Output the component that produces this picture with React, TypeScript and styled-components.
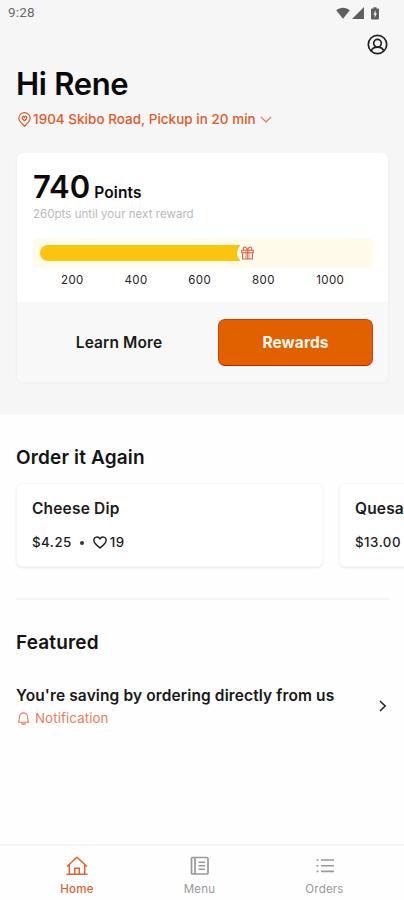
import React from "react";
import styled, { createGlobalStyle } from "styled-components";

const GlobalStyle = createGlobalStyle`
  * { box-sizing: border-box; }
  html, body { margin: 0; padding: 0; background: #fff; }
  body { font-family: Inter, "Liberation Sans", sans-serif; color: #111; }
  h1, h2, h3, p { margin: 0; }
  svg { display: block; flex: none; }
  button { font-family: inherit; cursor: pointer; }
`;

const ORANGE = "#e0592a";

const Screen = styled.div`
  width: 404px;
  height: 900px;
  display: flex;
  flex-direction: column;
  overflow: hidden;
  background: #fefefe;
`;

const Hero = styled.header`
  height: 415px;
  flex: none;
  background: #f6f6f6;
  border-bottom: 1px solid #f8f8f8;
`;

const StatusBar = styled.div`
  height: 26px;
  padding: 0 25px 0 8px;
  display: flex;
  align-items: center;
  justify-content: space-between;
  font: 400 13.5px/26px Roboto, sans-serif;
  color: #6a6a6a;
`;

const Clock = styled.span`
  height: 26px;
  line-height: 25px;
  letter-spacing: 0.2px;
`;

const StatusIcons = styled.div`
  height: 24px;
  display: flex;
  align-items: center;
`;

const Spacer = styled.span<{ $w: number }>`
  width: ${(p) => p.$w}px;
`;

const AccountRow = styled.div`
  height: 37px;
  padding: 8px 16px 0 0;
  display: flex;
  justify-content: flex-end;
`;

const Greeting = styled.h1`
  height: 41px;
  padding-left: 16px;
  font-size: 31px;
  line-height: 42px;
  font-weight: 600;
  letter-spacing: -0.3px;
  color: #080808;
`;

const LocationRow = styled.div`
  height: 30px;
  padding-left: 18px;
  display: flex;
  align-items: center;
  color: ${ORANGE};
`;

const LocationText = styled.span`
  margin: 0 4px 0 2px;
  font-size: 13.4px;
  line-height: 20px;
  font-weight: 500;
  letter-spacing: 0.07px;
  white-space: nowrap;
`;

const RewardsCard = styled.section`
  width: 373px;
  height: 231px;
  margin: 18px 0 0 16px;
  border: 1px solid #f1f1f1;
  border-top-color: #f6f6f6;
  border-radius: 7px;
  background: #fff;
  box-shadow: 0 1px 2px rgba(0, 0, 0, 0.03);
  overflow: hidden;
`;

const PointsPanel = styled.div`
  height: 149px;
  padding: 15px 15px 0 16px;
`;

const PointsLine = styled.div`
  height: 38px;
  display: flex;
  align-items: baseline;
  gap: 4px;
  color: #0a0a0a;
`;

const PointsValue = styled.span`
  font-size: 31px;
  line-height: 38px;
  font-weight: 600;
`;

const PointsUnit = styled.span`
  font-size: 15.5px;
  font-weight: 600;
  letter-spacing: 0.15px;
`;

const PointsHint = styled.p`
  height: 16px;
  font-size: 11.5px;
  line-height: 16px;
  letter-spacing: 0.04px;
  color: #b9b9b9;
  white-space: nowrap;
`;

const Track = styled.div`
  height: 30px;
  margin-top: 16px;
  padding: 0 8px 0 7px;
  display: flex;
  align-items: center;
  border-radius: 5px;
  background: #fffae9;
`;

const Fill = styled.div`
  width: 200px;
  height: 16px;
  border-radius: 8px 0 0 8px;
  background: #f9c510;
`;

const GiftMarker = styled.div`
  width: 20px;
  height: 20px;
  margin-left: -3px;
  display: grid;
  place-items: center;
  border-radius: 50%;
  background: #fffdf6;
  color: #df5b35;
`;

const Scale = styled.div`
  height: 16px;
  margin-top: 4px;
  padding-left: 7.5px;
  display: grid;
  grid-template-columns: repeat(4, 63.7px) 70px;
  text-align: center;
  font-size: 11.5px;
  line-height: 16px;
  letter-spacing: 0.4px;
  color: #222;
`;

const CardActions = styled.div`
  height: 81px;
  padding: 17px 15px 0 16px;
  display: grid;
  grid-template-columns: 172px 155px;
  column-gap: 13px;
  background: #f8f8f8;
`;

const ActionButton = styled.button<{ $primary?: boolean }>`
  height: 47px;
  padding: 0;
  border: 1px solid ${(p) => (p.$primary ? "#d43d0c" : "transparent")};
  border-bottom-color: ${(p) => (p.$primary ? "#cf1c06" : "transparent")};
  border-radius: 7px;
  background: ${(p) => (p.$primary ? "#e16100" : "transparent")};
  color: ${(p) => (p.$primary ? "#fff6ee" : "#1a1a1a")};
  font-size: 15.5px;
  font-weight: ${(p) => (p.$primary ? 700 : 600)};
  letter-spacing: 0.1px;
`;

const Content = styled.main`
  flex: 1;
  overflow: hidden;
`;

const SectionTitle = styled.h2`
  height: 25px;
  margin: 30px 0 0 16px;
  font-size: 19px;
  line-height: 26px;
  font-weight: 600;
  letter-spacing: 0.16px;
  color: #141414;
`;

const OrderList = styled.div`
  height: 114px;
  padding: 13px 0 0 16px;
  display: flex;
  gap: 16px;
  overflow: hidden;
`;

const OrderCard = styled.article`
  width: 307px;
  height: 84px;
  flex: none;
  padding: 14px 15px 0;
  border: 1px solid #f8f8f8;
  border-radius: 6px;
  background: #fff;
  box-shadow: 0 1px 2px rgba(0, 0, 0, 0.09);
`;

const OrderName = styled.h3`
  font-size: 15.5px;
  line-height: 22px;
  font-weight: 600;
  letter-spacing: 0.18px;
  color: #1c1c1c;
`;

const OrderMeta = styled.div`
  height: 20px;
  margin-top: 12px;
  display: flex;
  align-items: center;
  font-size: 13.3px;
  line-height: 20px;
  font-weight: 500;
  color: #1c1c1c;
`;

const Price = styled.span`
  letter-spacing: 0.5px;
`;

const Dot = styled.span`
  width: 4px;
  height: 4px;
  margin: 2px 9px 0 8px;
  border-radius: 50%;
  background: #333;
`;

const Likes = styled.span`
  margin-left: 3px;
  letter-spacing: 0.4px;
`;

const Divider = styled.hr`
  width: 373px;
  height: 2px;
  margin: 14px 0 0 16px;
  border: 0;
  background: #f4f4f4;
`;

const FeaturedRow = styled.div`
  margin: 29px 16px 0;
  display: flex;
  align-items: center;
  justify-content: space-between;
`;

const FeaturedTitle = styled.h3`
  font-size: 15.5px;
  line-height: 23px;
  font-weight: 600;
  letter-spacing: 0.12px;
  white-space: nowrap;
  color: #181818;
`;

const FeaturedTag = styled.div`
  height: 22px;
  padding-left: 1px;
  display: flex;
  align-items: center;
  gap: 5px;
  font-size: 13.3px;
  line-height: 22px;
  letter-spacing: 0.1px;
  color: #ea7b5d;
`;

const NavBar = styled.nav`
  height: 56px;
  flex: none;
  padding: 0 18px 0 16px;
  display: grid;
  grid-template-columns: 122px 123px 127px;
  border-top: 2px solid #f4f4f4;
`;

const NavItem = styled.a<{ $active?: boolean }>`
  padding-top: 10px;
  display: flex;
  flex-direction: column;
  align-items: center;
  gap: 5px;
  font-size: 11.5px;
  line-height: 16px;
  letter-spacing: 0.2px;
  font-weight: ${(p) => (p.$active ? 500 : 400)};
  color: ${(p) => (p.$active ? "#e25c33" : "#979797")};
`;

const WifiIcon = () => (
  <svg width="14" height="12" viewBox="0 0 14 12" fill="#5e5e5e">
    <path d="M0.2 3.3C4 -0.2 10 -0.2 13.8 3.3L7 11.8Z" />
  </svg>
);

const SignalIcon = () => (
  <svg width="12" height="12" viewBox="0 0 12 12" fill="#5e5e5e">
    <path d="M12 0V12H0Z" />
  </svg>
);

const BatteryIcon = () => (
  <svg width="8" height="13" viewBox="0 0 8 13">
    <path d="M2.5 0.3h3v1.3H7a1 1 0 0 1 1 1v9a1 1 0 0 1-1 1H1a1 1 0 0 1-1-1v-9a1 1 0 0 1 1-1h1.5Z" fill="#5e5e5e" />
    <path d="M4.6 3.3L2.3 7.5h1.4v3.2L5.9 6.4H4.6Z" fill="#f6f6f6" />
  </svg>
);

const AccountIcon = () => (
  <svg width="21" height="21" viewBox="0 0 21 21" fill="none" stroke="#202020" strokeWidth="1.7">
    <circle cx="10.5" cy="10.5" r="9.2" />
    <circle cx="10.5" cy="9.2" r="3.8" />
    <path d="M4.3 17C5.2 14.3 7.2 13.2 10.5 13.2s5.3 1.1 6.2 3.8" />
  </svg>
);

const PinIcon = () => (
  <svg width="13" height="15" viewBox="0 0 13 15" fill="none" stroke="currentColor" strokeWidth="1.2">
    <path d="M6.5 14.2C4.5 11.8 0.8 9.5 0.8 6.2a5.7 5.5 0 0 1 11.4 0C12.2 9.5 8.5 11.8 6.5 14.2Z" />
    <path d="M6.5 8.7C5.3 7.8 4.2 6.9 4.2 5.7c0-1.5 1.7-1.7 2.3-.5.6-1.2 2.3-1 2.3.5 0 1.2-1.1 2.1-2.3 3Z" />
  </svg>
);

const ChevronDownIcon = () => (
  <svg width="12" height="8" viewBox="0 0 12 8" fill="none" stroke="currentColor" strokeWidth="1.2" opacity="0.85">
    <path d="M0.8 1.8L6 7L11.2 1.8" />
  </svg>
);

const GiftIcon = () => (
  <svg width="13" height="14" viewBox="0 0 13 14" fill="none" stroke="currentColor" strokeWidth="1.1">
    <path d="M6.5 4V13M5 4.3V13M8 4.3V13" strokeWidth="0.8" />
    <path d="M1.6 6.8V13h9.8V6.8M0.7 4.2h11.6v2.6H0.7ZM6.5 4.2C5.8 1.8 4.8 1 3.6 1 2 1 1.8 3.3 3.2 4.2M6.5 4.2C7.2 1.8 8.2 1 9.4 1c1.6 0 1.8 2.3.4 3.2" />
  </svg>
);

const HeartIcon = () => (
  <svg width="14" height="13" viewBox="0 0 14 13" fill="none" stroke="#202020" strokeWidth="1.4" strokeLinejoin="round">
    <path d="M7 12C4.6 9.8 0.8 7.5 0.8 4.3 0.8 0.8 5.4-.2 7 3 8.6-.2 13.2.8 13.2 4.3 13.2 7.5 9.4 9.8 7 12Z" />
  </svg>
);

const ChevronRightIcon = () => (
  <svg width="10" height="14" viewBox="0 0 10 14" fill="none" stroke="#202020" strokeWidth="1.5">
    <path d="M2 1L7.2 6L2 11" />
  </svg>
);

const BellIcon = () => (
  <svg width="13" height="13" viewBox="0 0 13 13" fill="none" stroke="currentColor" strokeWidth="1.1" strokeLinejoin="round">
    <path d="M1.2 10.3C2.5 8.6 2.3 7.5 2.4 5.2a4.1 4.3 0 0 1 8.2 0c.1 2.3-.1 3.4 1.2 5.1Z" />
    <path d="M5 10.5v1.6h3v-1.6" />
  </svg>
);

const HomeIcon = () => (
  <svg width="22" height="20" viewBox="0 0 22 20" fill="none" stroke="#de622f" strokeWidth="1.5">
    <path d="M0.5 18.2H21.5M3.3 18V9M18.7 18V9M1 10.5L11 1.3L21 10.5" />
    <path d="M8.7 18V12.3h4.6V18" />
  </svg>
);

const MenuIcon = () => (
  <svg width="20" height="20" viewBox="0 0 20 20" fill="none" stroke="#999" strokeWidth="1.7">
    <rect x="1.5" y="1.5" width="16.5" height="16.5" rx="1" />
    <path d="M5 1.5V18" />
    <path d="M8.5 6.2h6.5M8.5 9.7h6.5M8.5 13.2h6.5" strokeWidth="1.5" />
  </svg>
);

const OrdersIcon = () => (
  <svg width="18" height="20" viewBox="0 0 18 20" fill="none" stroke="#999" strokeWidth="1.6">
    <path d="M0.5 4h2M0.5 9.7h2M0.5 15.4h2M5 4h13M5 9.7h13M5 15.4h13" />
  </svg>
);

const orders = [
  { name: "Cheese Dip", price: "$4.25", likes: 19 },
  { name: "Quesadilla", price: "$13.00", likes: 12 },
];

export default function App() {
  return (
    <Screen>
      <GlobalStyle />
      <Hero>
        <StatusBar>
          <Clock>9:28</Clock>
          <StatusIcons>
            <WifiIcon />
            <Spacer $w={2} />
            <SignalIcon />
            <Spacer $w={7} />
            <BatteryIcon />
          </StatusIcons>
        </StatusBar>
        <AccountRow>
          <AccountIcon />
        </AccountRow>
        <Greeting>Hi Rene</Greeting>
        <LocationRow>
          <PinIcon />
          <LocationText>1904 Skibo Road, Pickup in 20 min</LocationText>
          <ChevronDownIcon />
        </LocationRow>
        <RewardsCard>
          <PointsPanel>
            <PointsLine>
              <PointsValue>740</PointsValue>
              <PointsUnit>Points</PointsUnit>
            </PointsLine>
            <PointsHint>260pts until your next reward</PointsHint>
            <Track>
              <Fill />
              <GiftMarker>
                <GiftIcon />
              </GiftMarker>
            </Track>
            <Scale>
              {[200, 400, 600, 800, 1000].map((n) => (
                <span key={n}>{n}</span>
              ))}
            </Scale>
          </PointsPanel>
          <CardActions>
            <ActionButton>Learn More</ActionButton>
            <ActionButton $primary>Rewards</ActionButton>
          </CardActions>
        </RewardsCard>
      </Hero>
      <Content>
        <SectionTitle>Order it Again</SectionTitle>
        <OrderList>
          {orders.map((o) => (
            <OrderCard key={o.name}>
              <OrderName>{o.name}</OrderName>
              <OrderMeta>
                <Price>{o.price}</Price>
                <Dot />
                <HeartIcon />
                <Likes>{o.likes}</Likes>
              </OrderMeta>
            </OrderCard>
          ))}
        </OrderList>
        <Divider />
        <SectionTitle>Featured</SectionTitle>
        <FeaturedRow>
          <div>
            <FeaturedTitle>You're saving by ordering directly from us</FeaturedTitle>
            <FeaturedTag>
              <BellIcon />
              Notification
            </FeaturedTag>
          </div>
          <ChevronRightIcon />
        </FeaturedRow>
      </Content>
      <NavBar>
        <NavItem $active>
          <HomeIcon />
          Home
        </NavItem>
        <NavItem>
          <MenuIcon />
          Menu
        </NavItem>
        <NavItem>
          <OrdersIcon />
          Orders
        </NavItem>
      </NavBar>
    </Screen>
  );
}
